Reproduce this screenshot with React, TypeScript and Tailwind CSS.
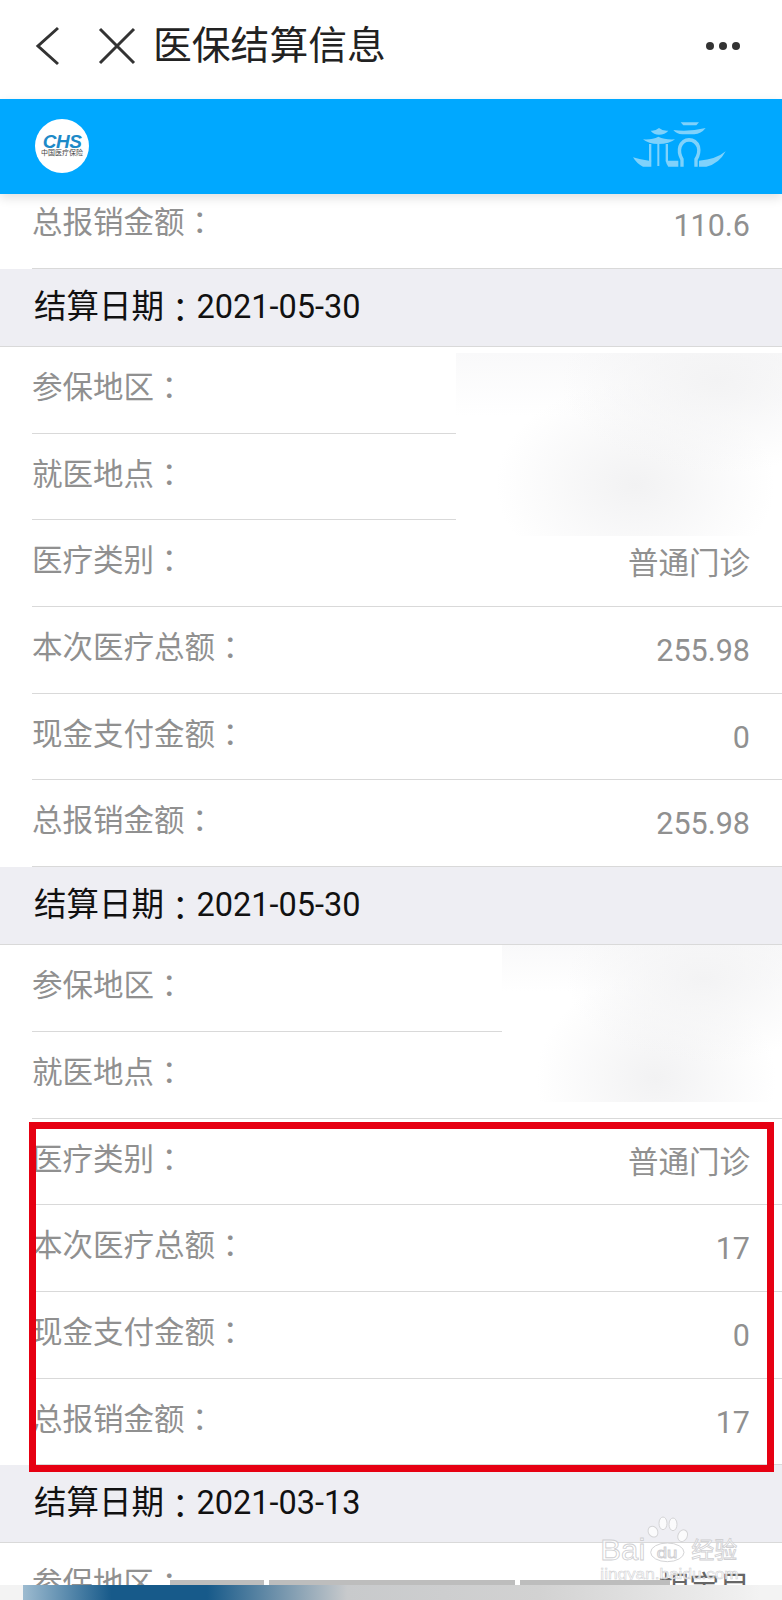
import React from 'react';

const rows = (region: string, total: string, cash: string, paid: string) => [
  ['参保地区', region],
  ['就医地点', ''],
  ['医疗类别', '普通门诊'],
  ['本次医疗总额', total],
  ['现金支付金额', cash],
  ['总报销金额', paid],
];

const sections = [
  { date: '2021-05-30', items: rows('', '255.98', '0', '255.98') },
  { date: '2021-05-30', items: rows('', '17', '0', '17') },
  { date: '2021-03-13', items: rows('相宝目', '', '', '') },
];

const Colon = () => <span className="relative top-[1px] font-['Noto_Sans_CJK_TC']">：</span>;

const Row = ({ label, value }: { label: string; value: string }) => (
  <div className="ml-8 h-[86.7px] border-b border-[#d9d9d9] flex justify-between items-start pr-[32px] text-[30.5px] leading-[30px]">
    <span className="pt-[23px] text-[#909090]">
      {label}
      <Colon />
    </span>
    <span className={value === '相宝目' ? 'pt-[30px] text-[#666666]' : 'pt-[29px] text-[#909090]'}>{value}</span>
  </div>
);

const PavilionLogo = () => (
  <svg viewBox="0 0 360 210" className="w-[120px] h-[70px] mt-[-4px]" fill="#7fd2fb">
    <path d="M185 37 L240 37 L232 46 L193 46 Z" />
    <path d="M163 60 Q210 66 260 54 Q246 72 226 73 L190 73 Q172 72 163 60 Z" />
    <path d="M95 62 Q108 64 120 54 Q132 64 148 62 Q138 74 120 74 Q104 74 95 62 Z" />
    <path d="M72 88 Q100 90 118 80 Q138 90 168 88 Q152 102 118 102 Q88 102 72 88 Z" />
    <rect x="90" y="102" width="7" height="52" />
    <rect x="115" y="102" width="6" height="66" />
    <rect x="140" y="102" width="7" height="52" />
    <path d="M42 142 Q66 150 90 152 L97 152 L97 170 L72 170 Q54 162 42 142 Z" />
    <path d="M140 152 L178 152 L178 170 L148 170 Q142 162 140 152 Z" />
    <path
      d="M184 170 L184 150 Q172 128 178 108 Q188 84 210 84 Q234 84 243 108 Q248 130 236 150 L236 170 L226 170 L226 146 Q238 128 233 112 Q226 95 210 95 Q194 95 188 112 Q183 128 194 146 L194 170 Z"
    />
    <path d="M320 124 Q292 148 240 152 L240 170 L262 170 Q300 162 320 124 Z" />
  </svg>
);

const Watermark = () => (
  <svg viewBox="0 0 600 285" className="absolute left-[582px] top-[1505px] w-[200px] h-[95px]">
    <g fill="#ffffff" fillOpacity="0.75" stroke="#d4d4d6" strokeWidth="3">
      <ellipse cx="213" cy="80" rx="14" ry="17" transform="rotate(-30 213 80)" />
      <ellipse cx="243" cy="55" rx="12" ry="19" />
      <ellipse cx="273" cy="58" rx="12" ry="19" />
      <ellipse cx="302" cy="92" rx="14" ry="18" transform="rotate(25 302 92)" />
      <ellipse cx="256" cy="142" rx="50" ry="28" />
    </g>
    <g fill="#ffffff" fillOpacity="0.75" stroke="#cfcfd2" strokeWidth="2.5" fontFamily="'Liberation Sans', sans-serif">
      <text x="55" y="165" fontSize="88" textLength="135" lengthAdjust="spacingAndGlyphs">Bai</text>
      <text x="224" y="160" fontSize="44" textLength="62" lengthAdjust="spacingAndGlyphs">du</text>
      <text x="328" y="160" fontSize="68" fontFamily="'Noto Sans CJK SC', sans-serif" textLength="138" lengthAdjust="spacingAndGlyphs">经验</text>
    </g>
    <text x="55" y="222" fontSize="44" fill="#ffffff" fillOpacity="0.8" stroke="#cfcfd2" strokeWidth="1.5" fontFamily="'Liberation Sans', sans-serif" textLength="415" lengthAdjust="spacingAndGlyphs">jingyan.baidu.com</text>
  </svg>
);

export default function App() {
  return (
    <div className="relative w-[782px] h-[1600px] overflow-hidden bg-white font-['Roboto','Noto_Sans_CJK_SC',sans-serif]">
      <div className="h-[99px] flex items-center text-[#333333]">
        <svg viewBox="0 0 30 40" className="ml-[32px] w-[30px] h-[40px] mt-[-8px]" fill="none" stroke="#333333" strokeWidth="3">
          <path d="M26 2 L6 20 L26 38" />
        </svg>
        <svg viewBox="0 0 40 40" className="ml-[35px] w-[40px] h-[40px] mt-[-8px]" fill="none" stroke="#333333" strokeWidth="3">
          <path d="M3 3 L37 37 M37 3 L3 37" />
        </svg>
        <span className="ml-[16px] text-[38.8px] leading-none mt-[-6px] text-[#222222]">医保结算信息</span>
        <div className="ml-auto mr-[42px] mt-[-8px] flex gap-[5px]">
          <span className="w-[8px] h-[8px] rounded-full bg-[#333333]" />
          <span className="w-[8px] h-[8px] rounded-full bg-[#333333]" />
          <span className="w-[8px] h-[8px] rounded-full bg-[#333333]" />
        </div>
      </div>

      <div className="relative z-10 h-[95px] bg-[#00a8ff] shadow-[0_4px_10px_rgba(0,0,0,0.12)] flex items-center justify-between pl-[35px] pr-[43px]">
        <div className="w-[54px] h-[54px] rounded-full bg-white flex flex-col items-center justify-center mt-[-2px]">
          <span className="text-[19px] leading-[15px] font-bold italic tracking-[-0.5px] text-[#1d8ac8] font-['Liberation_Sans',sans-serif]">CHS</span>
          <span className="text-[7px] leading-[9px] text-[#444444]">中国医疗保险</span>
        </div>
        <PavilionLogo />
      </div>

      <div className="-mt-[12px] h-[87px] ml-8 border-b border-[#d9d9d9] flex justify-between items-start pr-[32px] text-[30.5px] leading-[30px]">
        <span className="pt-[23px] text-[#909090]">
          总报销金额
          <Colon />
        </span>
        <span className="pt-[29px] text-[#909090]">110.6</span>
      </div>

      {sections.map((section, i) => (
        <div key={i}>
          <div className="h-[78px] bg-[#eeeef3] border-b border-[#d9d9d9] flex items-center pl-[34px] text-[32.5px] text-[#111111]">
            结算日期
            <Colon />
            {section.date}
          </div>
          {section.items.map(([label, value]) => (
            <Row key={label} label={label} value={value} />
          ))}
        </div>
      ))}

      {/* blurred out values */}
      <div className="absolute left-[456px] top-[353px] w-[326px] h-[183px] bg-[radial-gradient(ellipse_at_80%_15%,#f3f3f4_0%,#ffffff00_42%),radial-gradient(ellipse_at_55%_72%,#f2f2f3_0%,#ffffff00_55%),linear-gradient(180deg,#f9f9fa_0%,#ffffff_35%,#ffffff_100%)]" />
      <div className="absolute left-[502px] top-[945px] w-[280px] h-[157px] bg-[radial-gradient(ellipse_at_72%_22%,#f3f3f4_0%,#ffffff00_48%),radial-gradient(ellipse_at_55%_85%,#f2f2f3_0%,#ffffff00_55%),linear-gradient(180deg,#f9f9fa_0%,#ffffff_30%,#ffffff_100%)]" />

      {/* red highlight box */}
      <div className="absolute left-[29px] top-[1122px] w-[745px] h-[350px] border-[7px] border-[#e60012]" />

      <Watermark />

      {/* cut off banner at the bottom */}
      <div className="absolute left-[170px] top-[1580px] w-[94px] h-[5px] bg-[#bdbdbd]" />
      <div className="absolute left-[269px] top-[1580px] w-[246px] h-[5px] bg-[#bdbdbd]" />
      <div className="absolute left-[520px] top-[1580px] w-[150px] h-[5px] bg-[#bdbdbd]" />
      <div className="absolute left-0 top-[1585px] w-[782px] h-[15px] bg-[#f3f3f3]" />
      <div className="absolute left-[23px] top-[1585px] w-[737px] h-[15px] bg-[linear-gradient(90deg,#9dbbd0_0%,#175a8a_12%,#175a8a_25%,#c8cacc_44%,#d2d2d2_70%,#efefef_97%,#f3f3f3_100%)]" />
    </div>
  );
}
